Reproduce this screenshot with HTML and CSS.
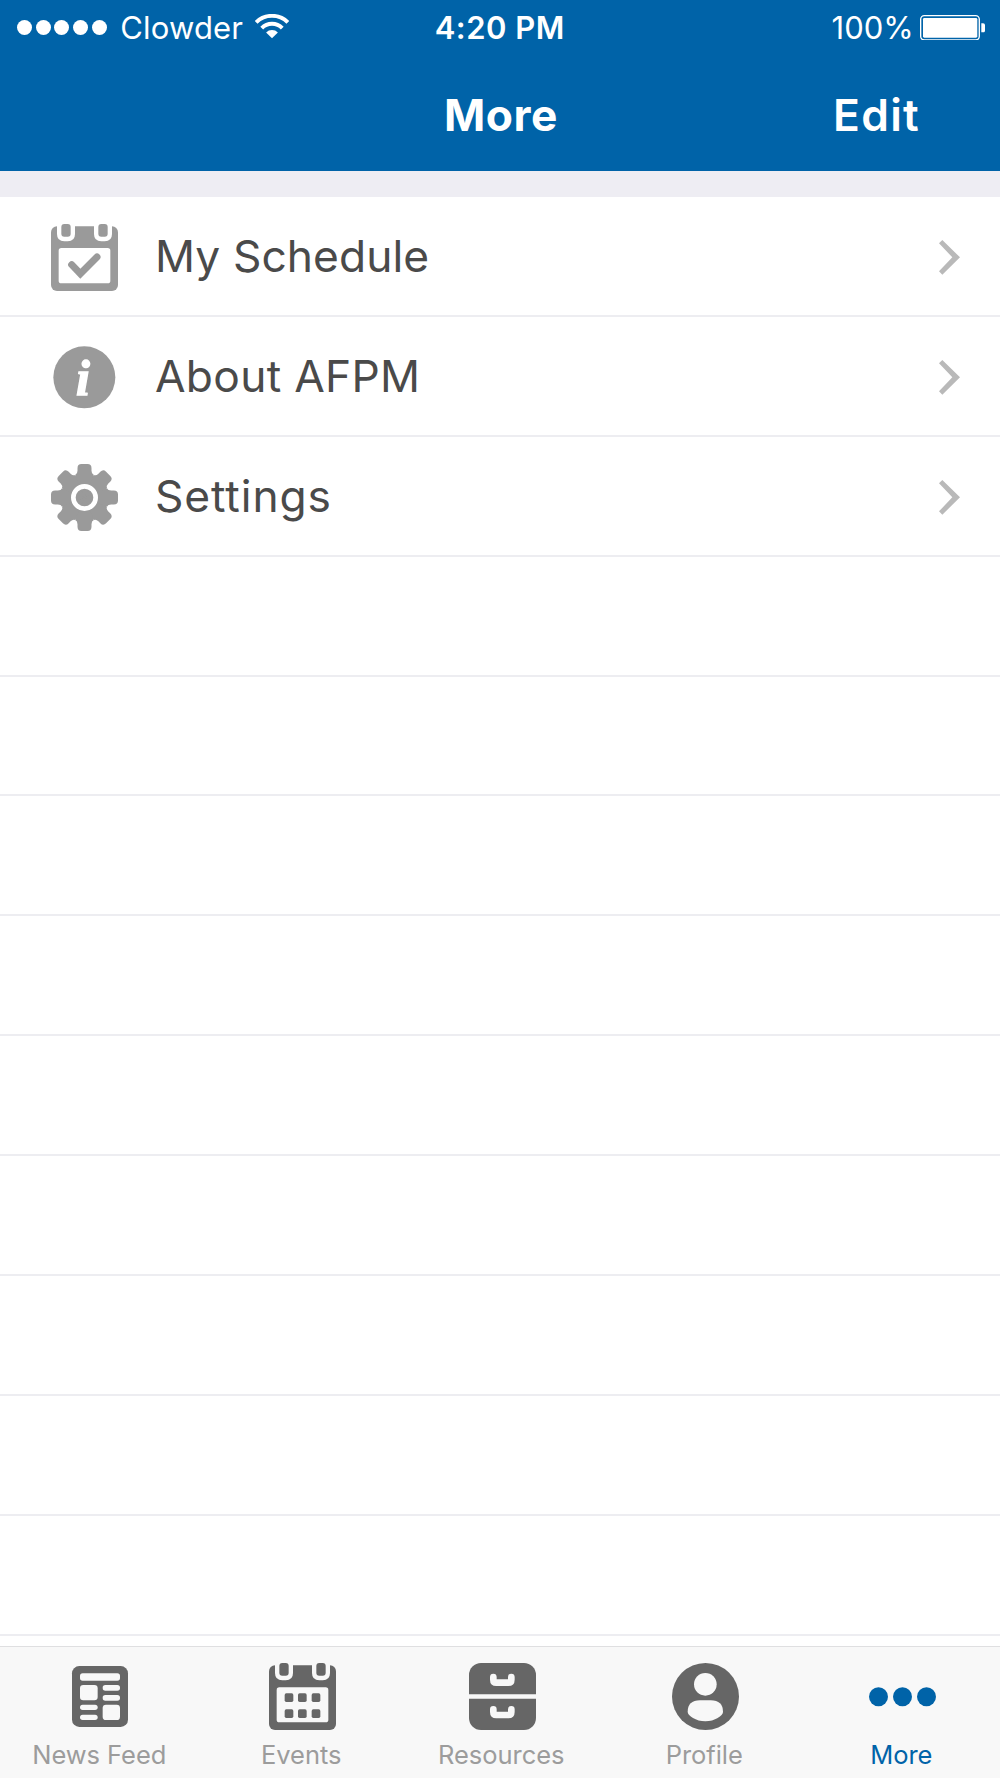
FILE: index.html
```
<!DOCTYPE html>
<html lang="en">
<head>
<meta charset="utf-8">
<title>More</title>
<link rel="stylesheet" href="styles.css">
</head>
<body>
<div class="app">
  <header class="header">
    <div class="status">
      <div class="status-left">
        <span class="signal"><i></i><i></i><i></i><i></i><i></i></span>
        <span class="carrier">Clowder</span>
        <svg class="wifi" viewBox="0 0 102 73"><g fill="none" stroke="#fff" stroke-width="12"><path d="M3.3 25.3A67.5 67.5 0 0 1 98.7 25.3"/><path d="M20.2 42.2A43.5 43.5 0 0 1 81.8 42.2"/></g><path fill="#fff" d="M51 73L33.3 55.3A25 25 0 0 1 68.7 55.3Z"/></svg>
      </div>
      <span class="time">4:20 PM</span>
      <div class="status-right">
        <span class="percent">100%</span>
        <svg class="battery" viewBox="0 0 196 77"><rect x="2" y="2" width="176" height="73" rx="11" fill="none" stroke="#fff" stroke-width="4"/><rect x="9" y="9" width="163" height="59" rx="4" fill="#fff"/><path fill="#fff" d="M184 25h4q8 0 8 8v11q0 8-8 8h-4z"/></svg>
      </div>
    </div>
    <div class="navbar">
      <h1 class="title">More</h1>
      <a class="edit">Edit</a>
    </div>
  </header>
  <main class="list">
    <div class="row">
      <svg class="row-icon" viewBox="0 0 201 201"><rect y="7" width="201" height="194" rx="18" fill="#9a9a9a"/><path fill="#fff" d="M18 0H72V30Q72 52 50 52H40Q18 52 18 30ZM129 0H183V30Q183 52 161 52H151Q129 52 129 30Z"/><g fill="#9a9a9a"><rect x="31" width="28" height="38" rx="9"/><rect x="142" width="28" height="38" rx="9"/></g><rect x="23" y="72" width="155" height="106" rx="8" fill="#fff"/><path d="M62 122L88 149L138 99" fill="none" stroke="#9a9a9a" stroke-width="21" stroke-linecap="round"/></svg>
      <span class="row-label">My Schedule</span>
      <svg class="chevron" viewBox="0 0 63 104"><path d="M0 10L10 0L63 52L10 104L0 94L40 52Z"/></svg>
    </div>
    <div class="row">
      <svg class="row-icon" viewBox="0 0 201 201"><circle cx="100" cy="100" r="93" fill="#9a9a9a"/><text class="info-mark" x="75" y="154">i</text></svg>
      <span class="row-label about">About AFPM</span>
      <svg class="chevron" viewBox="0 0 63 104"><path d="M0 10L10 0L63 52L10 104L0 94L40 52Z"/></svg>
    </div>
    <div class="row">
      <svg class="row-icon" viewBox="-100.5 -100.5 201 201"><defs><path id="tooth" d="M-28 -67.5Q-21 -70 -21 -80V-88Q-21 -100.5 -9 -100.5H9Q21 -100.5 21 -88V-80Q21 -70 28 -67.5L0 0Z"/></defs><g fill="#9a9a9a"><circle r="70"/><use href="#tooth"/><use href="#tooth" transform="rotate(45)"/><use href="#tooth" transform="rotate(90)"/><use href="#tooth" transform="rotate(135)"/><use href="#tooth" transform="rotate(180)"/><use href="#tooth" transform="rotate(225)"/><use href="#tooth" transform="rotate(270)"/><use href="#tooth" transform="rotate(315)"/></g><circle r="33.5" fill="none" stroke="#fff" stroke-width="14"/></svg>
      <span class="row-label wide">Settings</span>
      <svg class="chevron" viewBox="0 0 63 104"><path d="M0 10L10 0L63 52L10 104L0 94L40 52Z"/></svg>
    </div>
    <div class="row"></div><div class="row"></div><div class="row"></div>
    <div class="row"></div><div class="row"></div><div class="row"></div>
    <div class="row"></div><div class="row"></div><div class="row"></div>
  </main>
  <nav class="tabs">
    <a class="tab">
      <svg class="tab-icon" viewBox="-15 -9 201 201"><rect width="168" height="183" rx="22" fill="#666"/><g fill="#f8f8f8"><rect x="24" y="22" width="120" height="22" rx="8"/><rect x="24" y="57" width="53" height="46" rx="10"/><rect x="92" y="57" width="52" height="17" rx="8"/><rect x="92" y="87" width="52" height="17" rx="8"/><rect x="24" y="116" width="53" height="16" rx="8"/><rect x="24" y="146" width="53" height="16" rx="8"/><rect x="92" y="116" width="52" height="46" rx="10"/></g></svg>
      <span class="tab-label">News Feed</span>
    </a>
    <a class="tab">
      <svg class="tab-icon" viewBox="0 0 201 201"><rect y="7" width="201" height="194" rx="18" fill="#666"/><path fill="#f8f8f8" d="M18 0H72V30Q72 52 50 52H40Q18 52 18 30ZM129 0H183V30Q183 52 161 52H151Q129 52 129 30Z"/><g fill="#666"><rect x="31" width="28" height="38" rx="9"/><rect x="142" width="28" height="38" rx="9"/></g><rect x="23" y="73" width="155" height="105" rx="8" fill="#f8f8f8"/><g fill="#666"><rect x="47" y="91" width="26" height="26" rx="5"/><rect x="87" y="91" width="26" height="26" rx="5"/><rect x="128" y="91" width="26" height="26" rx="5"/><rect x="47" y="139" width="26" height="26" rx="5"/><rect x="87" y="139" width="26" height="26" rx="5"/><rect x="128" y="139" width="26" height="26" rx="5"/></g></svg>
      <span class="tab-label">Events</span>
    </a>
    <a class="tab">
      <svg class="tab-icon" viewBox="0 0 201 201"><rect width="201" height="201" rx="36" fill="#666"/><path fill="#f8f8f8" d="M0 94H201V107H0Z"/><g fill="none" stroke="#f8f8f8" stroke-width="20" stroke-linecap="round"><path d="M73 42V50Q73 59 82 59H118Q127 59 127 50V42"/><path d="M73 139V147Q73 156 82 156H118Q127 156 127 147V139"/></g></svg>
      <span class="tab-label">Resources</span>
    </a>
    <a class="tab">
      <svg class="tab-icon" viewBox="0 0 201 201"><circle cx="100.5" cy="100.5" r="100.5" fill="#666"/><g fill="#f8f8f8"><circle cx="100" cy="64" r="34"/><path d="M47 147Q47 112 84 112H116Q153 112 153 147C153 158 128 175 100 175S47 158 47 147Z"/></g></svg>
      <span class="tab-label">Profile</span>
    </a>
    <a class="tab active">
      <svg class="tab-icon" viewBox="0 0 201 201"><g fill="#0063a8"><circle cx="28.5" cy="101" r="28.5"/><circle cx="100.5" cy="101" r="28.5"/><circle cx="172.5" cy="101" r="28.5"/></g></svg>
      <span class="tab-label">More</span>
    </a>
  </nav>
</div>
</body>
</html>
```
FILE: styles.css
```
* { box-sizing: border-box; }

body {
  margin: 0;
  background: #fff;
  font-family: Inter, "Liberation Sans", sans-serif;
  color: #4a4a4a;
}

svg { display: block; flex: none; }

.app {
  display: flex;
  flex-direction: column;
  width: 1000px;
  height: 1778px;
  overflow: hidden;
}

.header {
  flex: none;
  height: 171px;
  background: #0063a8;
  color: #fff;
}

.status {
  display: grid;
  grid-template-columns: 1fr auto 1fr;
  align-items: center;
  height: 55px;
  padding: 0 15px 0 17px;
  font-size: 31px;
  line-height: 38px;
}

.status-left,
.status-right {
  display: flex;
  align-items: center;
}

.status-right { justify-content: flex-end; }

.signal {
  display: flex;
  gap: 3.7px;
  margin-right: 13.5px;
}

.signal i {
  width: 15px;
  height: 15px;
  border-radius: 50%;
  background: #fff;
}

.carrier { letter-spacing: 0.16px; }

.wifi {
  width: 34px;
  height: 24.3px;
  margin: 0 0 2px 12px;
}

.time {
  margin-right: 2.5px;
  font-weight: 600;
  letter-spacing: 0.5px;
}

.percent { letter-spacing: 0; }

.battery {
  width: 65.3px;
  height: 25.7px;
  margin-left: 6px;
}

.navbar {
  display: grid;
  grid-template-columns: 1fr auto 1fr;
  align-items: center;
  height: 119px;
  padding: 0 80px 0 82px;
  font-size: 44.3px;
  font-weight: 600;
}

.title {
  grid-column: 2;
  margin: 0;
  font-size: inherit;
  font-weight: 700;
  letter-spacing: 0.6px;
}

.edit {
  justify-self: end;
  letter-spacing: 1.3px;
}

.list {
  flex: 1;
  min-height: 0;
  overflow: hidden;
  border-top: 26px solid #eeedf3;
}

.row {
  display: flex;
  align-items: center;
  height: 119.9px;
  padding: 0 40px 0 50.5px;
  border-bottom: 2px solid #ededf1;
}

.row-icon {
  width: 67px;
  height: 67px;
  margin-top: 3px;
}

.info-mark {
  font: italic bold 150px "Liberation Serif", serif;
  fill: #fff;
  stroke: #fff;
  stroke-width: 4px;
}

.row-label {
  flex: 1;
  margin-left: 37.5px;
  font-size: 44.3px;
  letter-spacing: 0.1px;
}

.row-label.about { letter-spacing: 0.3px; }

.row-label.wide { letter-spacing: 0.9px; }

.chevron {
  width: 21px;
  height: 34.7px;
  margin-top: 3px;
  fill: #b9b9b9;
}

.tabs {
  flex: none;
  display: grid;
  grid-template-columns: 201px 203px 197px 209px 185px;
  height: 132px;
  border-top: 1px solid #dfdfe1;
  background: #f8f8f8;
}

.tab {
  display: flex;
  flex-direction: column;
  align-items: center;
  padding-top: 16px;
  color: #9c9c9c;
}

.tab-icon {
  width: 67px;
  height: 67px;
}

.tab-label {
  margin-top: 9px;
  padding-right: 2.5px;
  font-size: 25.5px;
  line-height: 31px;
  letter-spacing: -0.05px;
}

.active { color: #0063a8; }
```
